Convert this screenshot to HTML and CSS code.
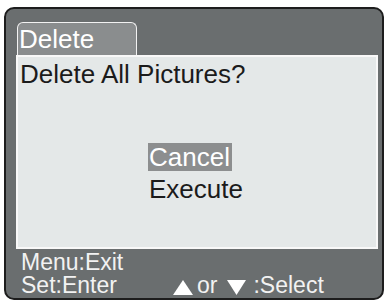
FILE: index.html
```html
<!DOCTYPE html>
<html>
<head>
<meta charset="utf-8">
<link rel="stylesheet" href="styles.css">
</head>
<body>
<div class="screen">
  <div class="tab">Delete</div>
  <div class="panel">
    <div class="question">Delete All Pictures?</div>
    <div class="options">
      <div class="opt selected">Cancel</div>
      <div class="opt">Execute</div>
    </div>
  </div>
  <div class="footer">
    <div class="row">Menu:Exit</div>
    <div class="row">
      <span class="key">Set:Enter</span>
      <span class="nav"><svg class="tri up" width="20" height="15" viewBox="0 0 20 15"><polygon points="0,15 10,0 20,15" fill="#fff"/></svg><span class="or">or</span><svg class="tri down" width="19" height="15" viewBox="0 0 19 15"><polygon points="0,0 19,0 9.5,15" fill="#fff"/></svg><span>:Select</span></span>
    </div>
  </div>
</div>
</body>
</html>
```
FILE: styles.css
```css
html, body {
  margin: 0;
  padding: 0;
  background: #ffffff;
}
body {
  font-family: "Liberation Sans", Arial, sans-serif;
}
.screen {
  box-sizing: border-box;
  width: 380px;
  height: 293px;
  margin: 7px 0 0 4px;
  border: 2px solid #1d1d1d;
  border-radius: 10px;
  background: #6a6e6f;
  padding: 13px 4px 0 10px;
  display: flex;
  flex-direction: column;
}
.tab {
  box-sizing: border-box;
  width: 120px;
  height: 33px;
  margin-left: 1px;
  border: 1px solid #f2f2f2;
  border-bottom: none;
  border-radius: 6px 6px 0 0;
  background: #8a8d8e;
  padding: 1px 0 0 1px;
  font-size: 26px;
  line-height: 30px;
  color: #ffffff;
}
.panel {
  box-sizing: border-box;
  height: 194px;
  border: 2px solid #f8f8f8;
  background: #e4e8e8;
  padding: 1.5px 2px;
  color: #1b1b1b;
  font-size: 26px;
}
.question {
  line-height: 30px;
}
.options {
  margin: 54.5px 0 0 128px;
  display: flex;
  flex-direction: column;
  align-items: flex-start;
}
.opt {
  line-height: 28px;
  padding: 0 2px 0 1px;
}
.opt + .opt {
  margin-top: 4px;
}
.opt.selected {
  background: #8c8e8f;
  color: #ffffff;
}
.footer {
  margin-top: 1.5px;
  padding-left: 5px;
  font-size: 23px;
  line-height: 23.5px;
  color: #f2f2f2;
}
.row {
  display: flex;
  white-space: nowrap;
}
.key {
  width: 152px;
}
.tri {
  vertical-align: -2px;
}
.or {
  margin: 0 10px 0 4px;
}
.tri.down {
  margin-right: 7px;
}
```
